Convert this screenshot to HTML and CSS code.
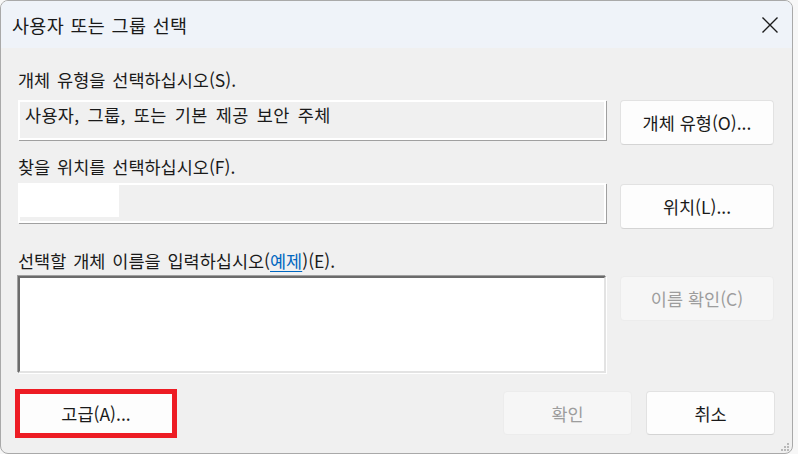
FILE: index.html
```html
<!DOCTYPE html>
<html lang="ko">
<head>
  <meta charset="UTF-8">
  <title>사용자 또는 그룹 선택</title>
  <link rel="stylesheet" href="styles.css">
</head>
<body>
  <div class="window">
    <div class="titlebar">
      <span class="title">사용자 또는 그룹 선택</span>
      <svg class="close" width="18" height="18" viewBox="0 0 18 18">
        <path d="M1.5 1.5 L16.5 16.5 M16.5 1.5 L1.5 16.5" stroke="#1b1b1b" stroke-width="1.4" fill="none"/>
      </svg>
    </div>

    <div class="content">
      <div class="label label-type">개체 유형을 선택하십시오(S).</div>
      <div class="row">
        <div class="field">사용자, 그룹, 또는 기본 제공 보안 주체</div>
        <button class="btn">개체 유형(O)...</button>
      </div>

      <div class="label label-location">찾을 위치를 선택하십시오(F).</div>
      <div class="row">
        <div class="field"><span class="blank"></span></div>
        <button class="btn btn-location">위치(L)...</button>
      </div>

      <div class="label label-names">선택할 개체 이름을 입력하십시오(<a href="#">예제</a>)(E).</div>
      <div class="row">
        <div class="names"></div>
        <button class="btn disabled">이름 확인(C)</button>
      </div>

      <div class="footer">
        <button class="btn advanced">고급(A)...</button>
        <div class="actions">
          <button class="btn disabled ok">확인</button>
          <button class="btn cancel">취소</button>
        </div>
      </div>
    </div>

    <svg class="grip" width="12" height="10" viewBox="0 0 12 10">
      <rect x="9" y="1" width="2" height="2" fill="#b9b9b9"/>
      <rect x="6" y="4" width="2" height="2" fill="#b9b9b9"/>
      <rect x="9" y="4" width="2" height="2" fill="#b9b9b9"/>
      <rect x="3" y="7" width="2" height="2" fill="#b9b9b9"/>
      <rect x="6" y="7" width="2" height="2" fill="#b9b9b9"/>
      <rect x="9" y="7" width="2" height="2" fill="#b9b9b9"/>
    </svg>
  </div>
</body>
</html>
```

FILE: styles.css
```css
html, body {
  margin: 0;
  padding: 0;
}
body {
  width: 798px;
  height: 454px;
  overflow: hidden;
  background: #f7f7f7;
  font-family: "Noto Sans CJK KR", "Noto Sans", sans-serif;
  color: #1a1a1a;
}
.window {
  position: relative;
  width: 793px;
  height: 454px;
  box-sizing: border-box;
  border: 1px solid #a9a9a9;
  border-radius: 8px;
  background: #f0f0f0;
  overflow: hidden;
}
.titlebar {
  height: 47px;
  background: #eff3f9;
  display: flex;
  align-items: center;
  justify-content: space-between;
  padding: 0 13px 0 11px;
}
.title {
  font-size: 18.5px;
  letter-spacing: 0.3px;
  word-spacing: 1px;
  color: #1a1a1a;
}
.close {
  display: block;
}
.content {
  padding: 0 17px;
}
.label {
  font-size: 17.5px;
  line-height: 22px;
  height: 22px;
  word-spacing: 2px;
  color: #1a1a1a;
}
.label-type {
  margin: 21px 0 9px;
}
.label-location {
  margin: 11px 0 5px;
}
.label-names {
  margin: 21px 0 4px;
}
.label a {
  color: #0067c0;
  text-decoration: underline;
  text-underline-offset: 3px;
}
.row {
  display: grid;
  grid-template-columns: 588px 154px;
  column-gap: 14px;
  align-items: start;
}
.field {
  height: 40px;
  box-sizing: border-box;
  border: 2px solid #ffffff;
  box-shadow: 1px 1px 0 #a0a0a0;
  background: #f0f0f0;
  padding: 1px 0 0 5px;
  font-size: 17.5px;
  line-height: 24px;
  word-spacing: 3px;
  letter-spacing: 0.3px;
}
.blank {
  display: block;
  width: 99px;
  height: 34px;
  margin: -3px 0 0 -5px;
  background: #ffffff;
}
.names {
  height: 97px;
  box-sizing: border-box;
  background: #ffffff;
  border-top: 2px solid #6b6b6b;
  border-left: 2px solid #6b6b6b;
  border-right: 2px solid #e3e3e3;
  border-bottom: 2px solid #e3e3e3;
  box-shadow: 1px 1px 0 #ffffff, -1px -1px 0 #a0a0a0;
}
.btn {
  font-family: inherit;
  font-size: 17.5px;
  color: #1a1a1a;
  height: 45px;
  background: #fdfdfd;
  border: 1px solid #e2e2e2;
  border-bottom-color: #d4d4d4;
  border-radius: 4px;
  padding: 0;
  cursor: default;
}
.btn-location {
  margin-top: 1px;
}
.btn.disabled {
  background: #f6f6f6;
  border-color: #ececec;
  color: #9d9d9d;
}
.footer {
  display: flex;
  justify-content: space-between;
  align-items: center;
  margin-top: 18px;
}
.advanced {
  width: 152px;
  height: 39px;
  margin-left: 2px;
  border-radius: 0;
  border: none;
  outline: 5px solid #ed1c24;
}
.actions {
  display: flex;
  gap: 14px;
}
.ok, .cancel {
  width: 129px;
  height: 44px;
}
.grip {
  position: absolute;
  right: 2px;
  bottom: 1px;
}
```
